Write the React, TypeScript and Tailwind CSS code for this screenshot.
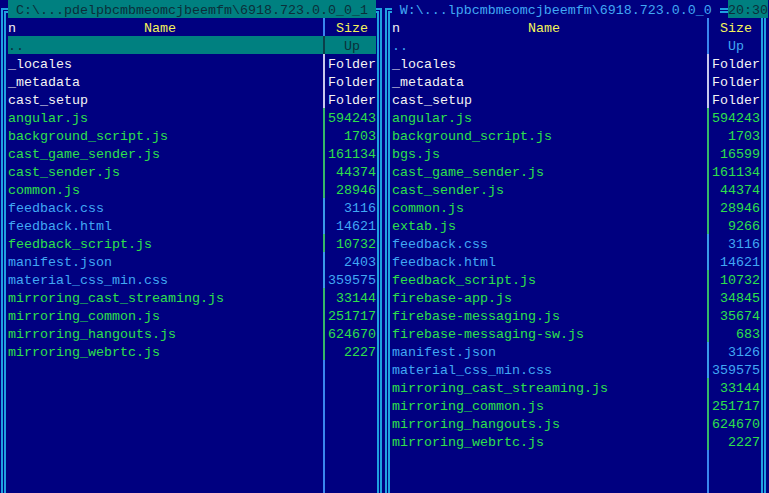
type Kind = "dir" | "js" | "doc" | "up";
type Item = { name: string; size: string; kind: Kind };

const leftItems: Item[] = [
  { name: "..", size: "Up", kind: "up" },
  { name: "_locales", size: "Folder", kind: "dir" },
  { name: "_metadata", size: "Folder", kind: "dir" },
  { name: "cast_setup", size: "Folder", kind: "dir" },
  { name: "angular.js", size: "594243", kind: "js" },
  { name: "background_script.js", size: "1703", kind: "js" },
  { name: "cast_game_sender.js", size: "161134", kind: "js" },
  { name: "cast_sender.js", size: "44374", kind: "js" },
  { name: "common.js", size: "28946", kind: "js" },
  { name: "feedback.css", size: "3116", kind: "doc" },
  { name: "feedback.html", size: "14621", kind: "doc" },
  { name: "feedback_script.js", size: "10732", kind: "js" },
  { name: "manifest.json", size: "2403", kind: "doc" },
  { name: "material_css_min.css", size: "359575", kind: "doc" },
  { name: "mirroring_cast_streaming.js", size: "33144", kind: "js" },
  { name: "mirroring_common.js", size: "251717", kind: "js" },
  { name: "mirroring_hangouts.js", size: "624670", kind: "js" },
  { name: "mirroring_webrtc.js", size: "2227", kind: "js" },
];

const rightItems: Item[] = [
  { name: "..", size: "Up", kind: "up" },
  { name: "_locales", size: "Folder", kind: "dir" },
  { name: "_metadata", size: "Folder", kind: "dir" },
  { name: "cast_setup", size: "Folder", kind: "dir" },
  { name: "angular.js", size: "594243", kind: "js" },
  { name: "background_script.js", size: "1703", kind: "js" },
  { name: "bgs.js", size: "16599", kind: "js" },
  { name: "cast_game_sender.js", size: "161134", kind: "js" },
  { name: "cast_sender.js", size: "44374", kind: "js" },
  { name: "common.js", size: "28946", kind: "js" },
  { name: "extab.js", size: "9266", kind: "js" },
  { name: "feedback.css", size: "3116", kind: "doc" },
  { name: "feedback.html", size: "14621", kind: "doc" },
  { name: "feedback_script.js", size: "10732", kind: "js" },
  { name: "firebase-app.js", size: "34845", kind: "js" },
  { name: "firebase-messaging.js", size: "35674", kind: "js" },
  { name: "firebase-messaging-sw.js", size: "683", kind: "js" },
  { name: "manifest.json", size: "3126", kind: "doc" },
  { name: "material_css_min.css", size: "359575", kind: "doc" },
  { name: "mirroring_cast_streaming.js", size: "33144", kind: "js" },
  { name: "mirroring_common.js", size: "251717", kind: "js" },
  { name: "mirroring_hangouts.js", size: "624670", kind: "js" },
  { name: "mirroring_webrtc.js", size: "2227", kind: "js" },
];

const textColor: Record<Kind, string> = {
  dir: "text-[#f4f4f4]",
  js: "text-[#2ee04a]",
  doc: "text-[#40a8f4]",
  up: "text-[#40a8f4]",
};

const sepColor: Record<Kind, string> = {
  dir: "bg-[#c8c8ec]",
  js: "bg-[#34b86a]",
  doc: "bg-[#3a9ae8]",
  up: "bg-[#3a86ee]",
};

// ╔ corner: double strokes turning right and down
function CornerLeft() {
  return (
    <div className="w-2 h-[18px] pt-[8px] pl-[1px]">
      <div className="h-full border-t-2 border-l-2 border-[#1fa0e0] pt-px pl-px">
        <div className="h-full border-t-2 border-l-2 border-[#1fa0e0]" />
      </div>
    </div>
  );
}

// ╗ corner
function CornerRight() {
  return (
    <div className="w-2 h-[18px] pt-[8px] pr-[2px]">
      <div className="h-full border-t-2 border-r-2 border-[#1fa0e0] pt-px pr-px">
        <div className="h-full border-t-2 border-r-2 border-[#1fa0e0]" />
      </div>
    </div>
  );
}

// ═
function HLine() {
  return (
    <div className="w-2 h-[18px] pt-[8px]">
      <div className="h-[5px] border-y-2 border-[#1fa0e0]" />
    </div>
  );
}

// ║
function VBorder() {
  return (
    <div className="w-2 flex pl-px gap-px">
      <div className="w-[2px] bg-[#1fa0e0]" />
      <div className="w-[2px] bg-[#1fa0e0]" />
    </div>
  );
}

function Sep({ color }: { color: string }) {
  return (
    <div className="w-2 flex pl-[3px]">
      <div className={`w-[2px] ${color}`} />
    </div>
  );
}

function Header() {
  return (
    <div className="flex h-[18px]">
      <div className="w-[312px] whitespace-pre">
        <span className="text-[#f4f4f4]">n</span>
        <span className="text-[#f4f45a]">{"                Name"}</span>
      </div>
      <Sep color="bg-[#3a86ee]" />
      <div className="w-12 text-center text-[#f4f45a]">Size</div>
    </div>
  );
}

function Row({ item, cursor }: { item: Item; cursor: boolean }) {
  const fg = cursor ? "text-[#0b2f3a]" : textColor[item.kind];
  return (
    <div className={`flex h-[18px] ${cursor ? "bg-[#008080]" : ""}`}>
      <div className={`w-[312px] whitespace-pre ${fg}`}>{item.name}</div>
      <Sep color={cursor ? "bg-[#0b3f4a]" : sepColor[item.kind]} />
      <div className={`w-12 ${item.kind === "up" ? "text-center" : "text-right"} ${fg}`}>{item.size}</div>
    </div>
  );
}

function Body({ items, cursor }: { items: Item[]; cursor: number }) {
  return (
    <div className="flex flex-1">
      <VBorder />
      <div className="flex flex-col w-[368px]">
        <Header />
        {items.map((it, i) => (
          <Row key={it.name} item={it} cursor={i === cursor} />
        ))}
        <div className="flex flex-1">
          <div className="w-[312px]" />
          <Sep color="bg-[#3a86ee]" />
          <div className="w-12" />
        </div>
      </div>
      <VBorder />
    </div>
  );
}

export default function App() {
  return (
    <div className="w-[769px] h-[493px] overflow-hidden bg-[#000080] flex font-['Liberation_Mono',monospace] text-[13.333px] leading-[22px]">
      {/* left panel (active) */}
      <div className="w-[384px] flex flex-col">
        <div className="flex h-[18px]">
          <CornerLeft />
          <div className="w-[368px] bg-[#008080] text-[#0b2f3a] whitespace-pre">
            {" C:\\...pdelpbcmbmeomcjbeemfm\\6918.723.0.0_0_1 "}
          </div>
          <CornerRight />
        </div>
        <Body items={leftItems} cursor={0} />
      </div>

      {/* right panel */}
      <div className="w-[384px] flex flex-col">
        <div className="flex h-[18px]">
          <CornerLeft />
          <div className="w-[328px] text-[#40a8f4] whitespace-pre">
            {" W:\\...lpbcmbmeomcjbeemfm\\6918.723.0.0_0"}
          </div>
          <div className="w-2" />
          <HLine />
          <div className="w-10 bg-[#008080] text-[#0b2f3a]">20:30</div>
        </div>
        <Body items={rightItems} cursor={-1} />
      </div>
    </div>
  );
}
